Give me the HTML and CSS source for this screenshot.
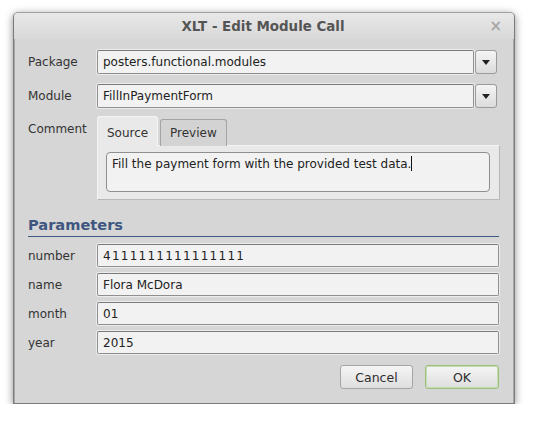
FILE: index.html
```html
<!DOCTYPE html>
<html>
<head>
<meta charset="utf-8">
<link rel="stylesheet" href="styles.css">
</head>
<body>
<div class="window">
  <div class="titlebar">
    <span class="title">XLT - Edit Module Call</span>
    <span class="close">×</span>
  </div>
  <div class="content">
    <div class="row">
      <div class="label">Package</div>
      <div class="combo">
        <div class="field">posters.functional.modules</div>
        <div class="dropbtn"><span class="arrow"></span></div>
      </div>
    </div>
    <div class="row">
      <div class="label">Module</div>
      <div class="combo">
        <div class="field">FillInPaymentForm</div>
        <div class="dropbtn"><span class="arrow"></span></div>
      </div>
    </div>
    <div class="row comment-row">
      <div class="label comment-label">Comment</div>
      <div class="tabs">
        <div class="tabbar">
          <div class="tab active">Source</div>
          <div class="tab">Preview</div>
        </div>
        <div class="panel">
          <div class="textarea">Fill the payment form with the provided test data.<span class="caret"></span></div>
        </div>
      </div>
    </div>
    <div class="section">Parameters</div>
    <div class="params">
      <div class="prow"><div class="label">number</div><div class="field wide digits">4111111111111111</div></div>
      <div class="prow"><div class="label">name</div><div class="field wide">Flora McDora</div></div>
      <div class="prow"><div class="label">month</div><div class="field wide">01</div></div>
      <div class="prow"><div class="label">year</div><div class="field wide">2015</div></div>
    </div>
    <div class="buttons">
      <div class="btn">Cancel</div>
      <div class="btn ok">OK</div>
    </div>
  </div>
</div>
</body>
</html>
```
FILE: styles.css
```css
html, body {
  margin: 0;
  padding: 0;
  background: #ffffff;
}
body {
  font-family: "DejaVu Sans", sans-serif;
  font-size: 12px;
  color: #2e2e2e;
}
.window {
  box-sizing: border-box;
  width: 502px;
  height: 392px;
  margin: 12px 0 0 13px;
  background: #d6d6d6;
  border: 1px solid #7a7a7a;
  border-top-color: #a0a0a0;
  border-radius: 5px 5px 0 0;
  box-shadow: 0 2px 9px rgba(0,0,0,0.45), inset 1px 0 0 #a8a8a8, inset -1px 0 0 #a8a8a8;
  display: flex;
  flex-direction: column;
}
.titlebar {
  height: 26px;
  display: flex;
  align-items: center;
  justify-content: center;
  position: relative;
  background: linear-gradient(#e8e8e8, #d8d8d8);
  border-radius: 4px 4px 0 0;
}
.title {
  font-weight: bold;
  font-size: 13.4px;
  color: #555555;
  margin-left: -2px;
}
.close {
  position: absolute;
  right: 12px;
  top: 4px;
  font-size: 15px;
  font-weight: bold;
  color: #a8a8a8;
}
.content {
  padding: 10px 15px 14px 14px;
  display: flex;
  flex-direction: column;
  flex: 1;
}
.row {
  display: flex;
  align-items: center;
  height: 24px;
  margin-bottom: 10px;
}
.row:first-child {
  margin-top: 1px;
}
.label {
  width: 69px;
  flex: none;
  color: #333333;
  font-size: 12px;
}
.combo {
  display: flex;
  flex: 1;
  gap: 1px;
  height: 24px;
  margin-right: 2px;
}
.field {
  box-sizing: border-box;
  flex: 1;
  height: 24px;
  background: #f2f2f2;
  border: 1px solid #8f8f8f;
  border-top-color: #7a7a7a;
  border-radius: 2px;
  padding: 0 5px;
  display: flex;
  align-items: center;
  font-size: 12px;
  color: #222222;
  box-shadow: 0 0 0 1px #ececec;
}
.field.digits {
  letter-spacing: 1.25px;
}
.dropbtn {
  box-sizing: border-box;
  width: 22px;
  height: 24px;
  flex: none;
  border: 1px solid #9a9a9a;
  border-radius: 3px;
  background: linear-gradient(#f4f4f4, #dcdcdc);
  display: flex;
  align-items: center;
  justify-content: center;
}
.arrow {
  width: 0;
  height: 0;
  border-left: 4px solid transparent;
  border-right: 4px solid transparent;
  border-top: 5px solid #222222;
}
.comment-row {
  height: auto;
  align-items: flex-start;
  margin-bottom: 0;
  margin-top: -2px;
}
.comment-label {
  padding-top: 6px;
}
.tabs {
  flex: 1;
  display: flex;
  flex-direction: column;
  margin-right: -1px;
}
.tabbar {
  display: flex;
  align-items: flex-end;
  gap: 2px;
  height: 30px;
  position: relative;
  z-index: 1;
  margin-bottom: -1px;
}
.tab {
  box-sizing: border-box;
  height: 27px;
  padding: 0 9px;
  display: flex;
  align-items: center;
  border: 1px solid #a4a4a4;
  border-bottom: none;
  border-radius: 3px 3px 0 0;
  background: #d3d3d3;
  font-size: 12px;
  color: #333333;
}
.tab.active {
  height: 30px;
  background: #e9e9e9;
  border-color: #f4f4f4;
  padding: 2px 9px 0 9px;
  width: 61px;
}
.panel {
  box-sizing: border-box;
  height: 55px;
  background: #e9e9e9;
  border: 1px solid #f4f4f4;
  border-right-color: #b8b8b8;
  border-bottom-color: #b8b8b8;
  padding: 6px 9px 7px 8px;
}
.textarea {
  box-sizing: border-box;
  height: 40px;
  background: #f2f2f2;
  border: 1px solid #8f8f8f;
  border-radius: 4px;
  padding: 3px 5px;
  font-size: 12px;
  color: #222222;
  line-height: 17px;
}
.caret {
  display: inline-block;
  width: 1px;
  height: 15px;
  background: #111111;
  vertical-align: -3px;
}
.section {
  margin-top: 16px;
  padding-bottom: 3px;
  border-bottom: 1px solid #3e5a85;
  font-weight: bold;
  font-size: 14.6px;
  color: #3e5680;
  line-height: 17px;
}
.params {
  margin-top: 7px;
  display: flex;
  flex-direction: column;
  gap: 6px;
}
.prow {
  display: flex;
  align-items: center;
  height: 23px;
}
.prow .field {
  height: 23px;
}
.buttons {
  margin-top: auto;
  display: flex;
  justify-content: flex-end;
  gap: 12px;
}
.btn {
  box-sizing: border-box;
  width: 73px;
  height: 24px;
  border: 1px solid #a5a5a5;
  border-radius: 3px;
  background: linear-gradient(#f5f5f5, #dedede);
  display: flex;
  align-items: center;
  justify-content: center;
  font-size: 12.5px;
  color: #2e2e2e;
}
.btn.ok {
  width: 74px;
  border: 1px solid #9ac07c;
  box-shadow: inset 0 0 0 1px #c6dcb4;
}
```
